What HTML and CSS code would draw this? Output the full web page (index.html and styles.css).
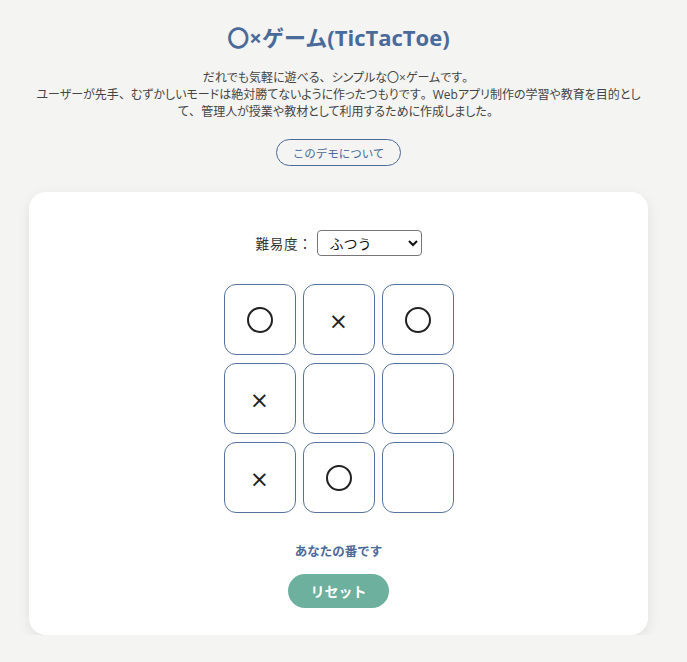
FILE: index.html
```html
<!DOCTYPE html>
<html lang="ja">
<head>
<meta charset="utf-8">
<title>〇×ゲーム</title>
<link rel="stylesheet" href="styles.css">
</head>
<body>
<main class="page">
  <header class="intro">
    <h1 class="title">〇×ゲーム(TicTacToe)</h1>
    <p class="desc">だれでも気軽に遊べる<span class="pn">、</span>シンプルな〇×ゲームです<span class="pn">。</span><br>ユーザーが先手<span class="pn">、</span>むずかしいモードは絶対勝てないように作ったつもりです<span class="pn">。</span>Webアプリ制作の学習や教育を目的として<span class="pn">、</span>管理人が授業や教材として利用するために作成しました<span class="pn">。</span></p>
    <button class="about">このデモについて</button>
  </header>
  <section class="card">
    <div class="level">
      <label class="level-label" for="lv">難易度：</label>
      <select id="lv" class="level-select">
        <option>ふつう</option>
      </select>
    </div>
    <div class="board">
      <div class="cell"><span class="o"></span></div>
      <div class="cell"><span class="x">×</span></div>
      <div class="cell"><span class="o"></span></div>
      <div class="cell"><span class="x">×</span></div>
      <div class="cell"></div>
      <div class="cell"></div>
      <div class="cell"><span class="x">×</span></div>
      <div class="cell"><span class="o"></span></div>
      <div class="cell"></div>
    </div>
    <p class="status">あなたの番です</p>
    <button class="reset">リセット</button>
  </section>
</main>
</body>
</html>
```
FILE: styles.css
```css
* { box-sizing: border-box; }
html, body { margin: 0; padding: 0; }
body {
  background: #f4f4f2;
  font-family: "Open Sans", "Noto Sans CJK JP", sans-serif;
  color: #333;
}
.page {
  padding: 22px 39px 0 29px;
}
.intro {
  display: flex;
  flex-direction: column;
  align-items: center;
  text-align: center;
}
.title {
  margin: 0;
  font-size: 22px;
  font-weight: 700;
  color: #4a6a99;
  line-height: 30px;
}
.desc {
  margin: 17px 0 0;
  font-size: 12px;
  line-height: 17px;
  color: #444;
  font-feature-settings: "palt";
}
.pn {
  font-feature-settings: normal;
}
.about {
  margin-top: 19px;
  width: 125px;
  height: 27px;
  border: 1px solid #4a6a99;
  border-radius: 14px;
  background: transparent;
  color: #4a6a99;
  font-family: inherit;
  font-size: 11.5px;
  padding: 0;
}
.card {
  margin-top: 26px;
  background: #fff;
  border-radius: 17px;
  box-shadow: 0 4px 14px rgba(0,0,0,0.08);
  padding: 38px 0 27px;
  display: flex;
  flex-direction: column;
  align-items: center;
}
.level {
  display: flex;
  align-items: center;
  gap: 4px;
}
.level-label {
  font-size: 13.5px;
  letter-spacing: 0.8px;
  color: #333;
}
.level-select {
  width: 105px;
  height: 26px;
  font-size: 14px;
  font-family: inherit;
  border: 1px solid #767676;
  border-radius: 4px;
  background: #fff;
  padding: 0 8px;
  color: #111;
}
.board {
  margin-top: 28px;
  display: grid;
  grid-template-columns: repeat(3, 72px);
  grid-auto-rows: 71px;
  gap: 8px 7px;
}
.cell {
  border: 1px solid #55739c;
  border-radius: 12px;
  display: flex;
  align-items: center;
  justify-content: center;
  background: #fff;
}
.o {
  width: 26px;
  height: 26px;
  border: 2px solid #222;
  border-radius: 50%;
}
.x {
  font-family: "DejaVu Sans", sans-serif;
  font-size: 23px;
  line-height: 1;
  color: #222;
  margin-top: 4px;
}
.status {
  margin: 30px 0 0;
  font-size: 12.5px;
  font-weight: 700;
  color: #4a6a99;
  line-height: 17px;
}
.reset {
  margin-top: 14px;
  width: 101px;
  height: 34px;
  border: none;
  border-radius: 17px;
  background: #6cb09d;
  color: #fff;
  font-family: inherit;
  font-size: 14px;
  font-weight: 700;
}
```
